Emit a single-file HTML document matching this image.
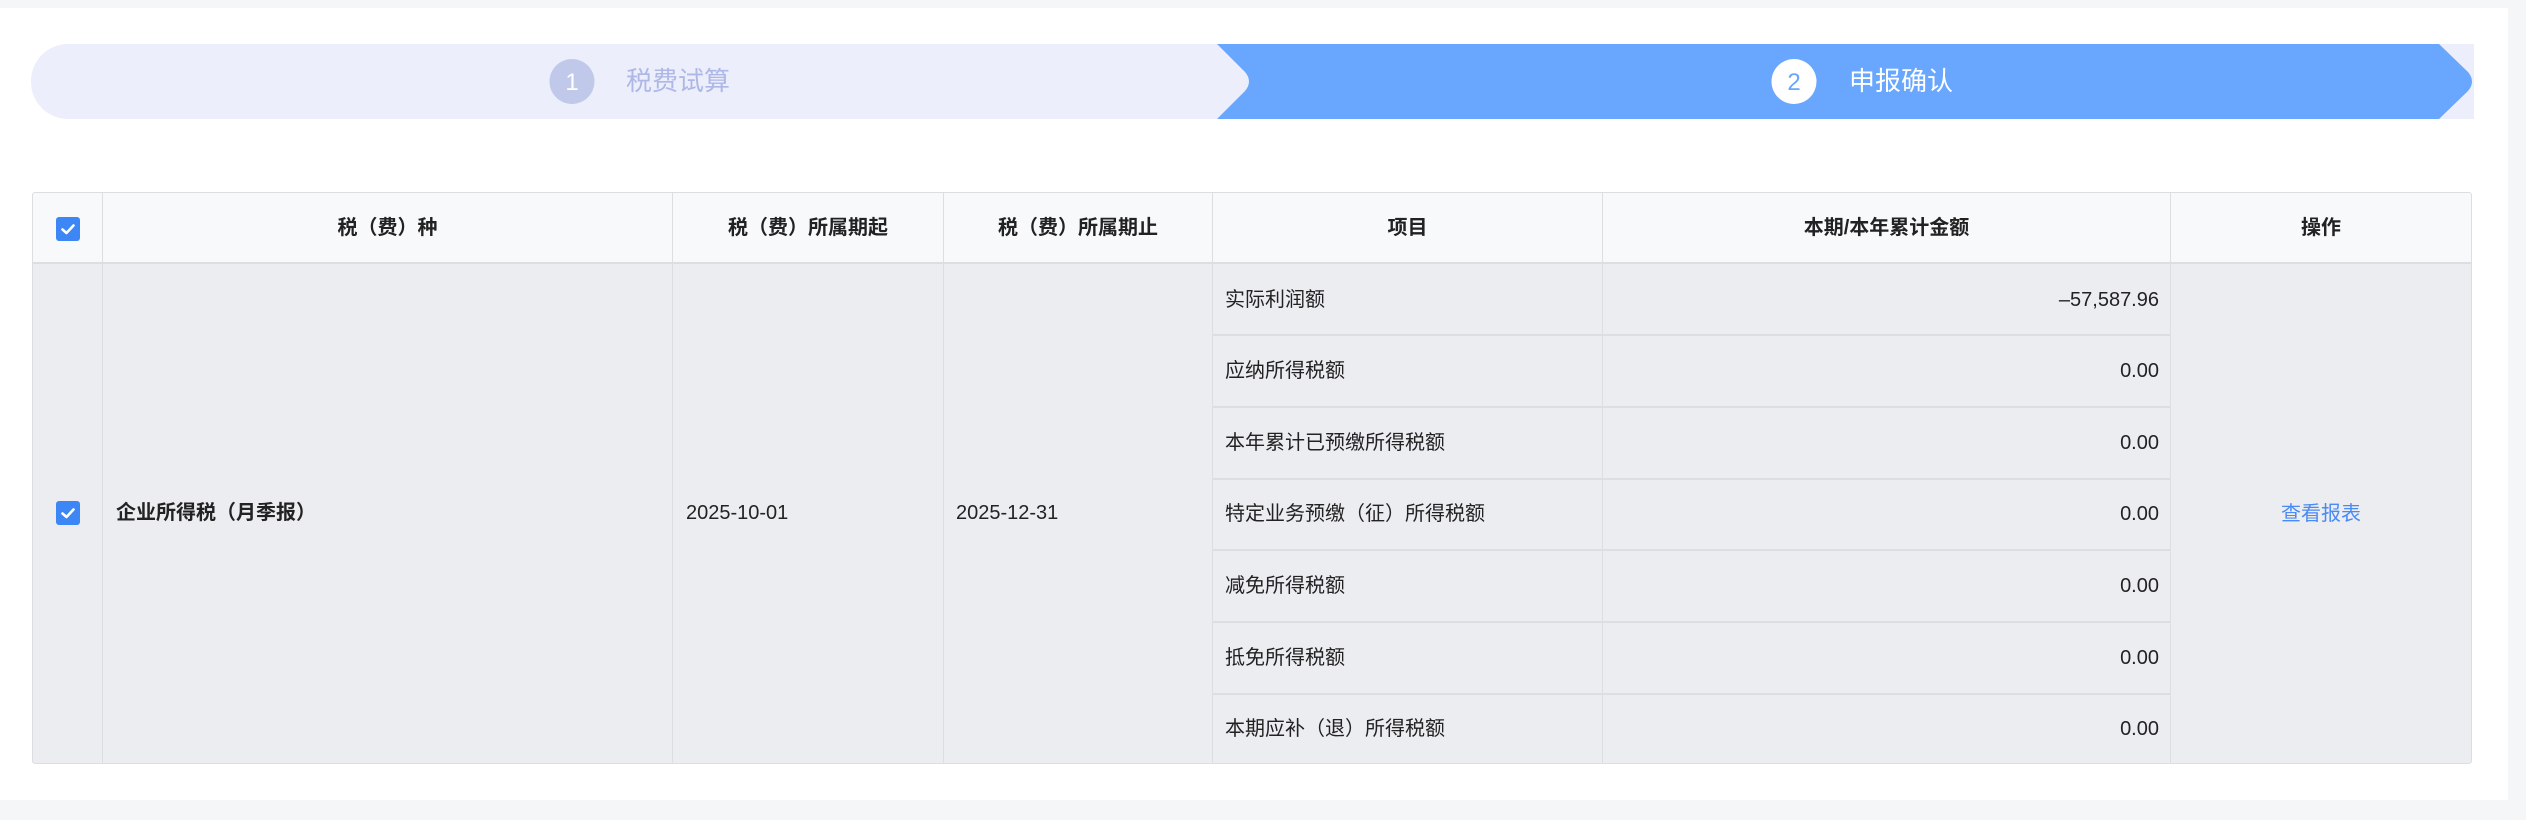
<!DOCTYPE html>
<html><head><meta charset="utf-8"><style>
*{margin:0;padding:0;box-sizing:border-box}
body{width:2526px;height:820px;background:#f5f6f8;font-family:"Liberation Sans","Noto Sans CJK SC",sans-serif;color:#222;position:relative;overflow:hidden}
.card{position:absolute;left:0;top:8px;width:2508px;height:792px;background:#fff}
.a{position:absolute}
.tbl{position:absolute;left:32px;top:192px;width:2440px;height:572px;border:1px solid #dcdee2;border-radius:3px;overflow:hidden;background:#ecedf1}
.hd{position:absolute;left:0;top:0;width:100%;height:71px;background:#f8f9fb;border-bottom:2px solid #dcdee2}
.vl{position:absolute;top:0;bottom:0;width:1px;background:#dcdee2}
.hl{position:absolute;height:2px;background:#dcdee2}
.th{position:absolute;top:0;height:71px;line-height:71px;text-align:center;font-weight:bold;font-size:20px;color:#222}
.td{position:absolute;font-size:20px;line-height:24px}
.cb{position:absolute;width:24px;height:24px;background:#3d86f5;border-radius:3px}
</style></head><body>
<div class="card"></div>
<svg class="a" style="left:0;top:0" width="2526" height="140">
<path d="M68 44 H2474 V119 H68 A37 37 0 0 1 31 81.5 A37 37 0 0 1 68 44Z" fill="#eceefb"/>
<path d="M1217 44 H2439 L2468 72 Q2476 81.5 2468 91 L2439 119 H1217 L1245 91 Q1253 81.5 1245 72Z" fill="#69a7ff"/>
<circle cx="572" cy="81.5" r="22.5" fill="#c0c9ea"/>
<text x="572" y="90" text-anchor="middle" font-size="24" fill="#fff" font-family="Liberation Sans">1</text>
<text x="626" y="90" font-size="26" fill="#aeb8e6" font-family="Liberation Sans, Noto Sans CJK SC, sans-serif">税费试算</text>
<circle cx="1794" cy="81.5" r="22.5" fill="#fff"/>
<text x="1794" y="90" text-anchor="middle" font-size="24" fill="#69a7ff" font-family="Liberation Sans">2</text>
<text x="1849" y="90" font-size="26" fill="#fff" font-family="Liberation Sans, Noto Sans CJK SC, sans-serif">申报确认</text>
</svg>
<div class="tbl">
<div class="hd"></div>
<div class="vl" style="left:69px"></div>
<div class="vl" style="left:639px"></div>
<div class="vl" style="left:910px"></div>
<div class="vl" style="left:1179px"></div>
<div class="vl" style="left:1569px"></div>
<div class="vl" style="left:2137px"></div>
<div class="hl" style="left:1180px;width:957px;top:141px"></div>
<div class="hl" style="left:1180px;width:957px;top:213px"></div>
<div class="hl" style="left:1180px;width:957px;top:285px"></div>
<div class="hl" style="left:1180px;width:957px;top:356px"></div>
<div class="hl" style="left:1180px;width:957px;top:428px"></div>
<div class="hl" style="left:1180px;width:957px;top:500px"></div>
<div class="cb" style="left:23px;top:24px"><svg width="24" height="24"><path d="M6.5 12.5 L10.5 16 L17.5 8.5" stroke="#fff" stroke-width="2.6" fill="none" stroke-linecap="round" stroke-linejoin="round"/></svg></div>
<div class="th" style="left:70px;width:569px">税（费）种</div>
<div class="th" style="left:640px;width:270px">税（费）所属期起</div>
<div class="th" style="left:911px;width:268px">税（费）所属期止</div>
<div class="th" style="left:1180px;width:389px">项目</div>
<div class="th" style="left:1570px;width:567px">本期/本年累计金额</div>
<div class="th" style="left:2138px;width:300px">操作</div>
<div class="cb" style="left:23px;top:308px"><svg width="24" height="24"><path d="M6.5 12.5 L10.5 16 L17.5 8.5" stroke="#fff" stroke-width="2.6" fill="none" stroke-linecap="round" stroke-linejoin="round"/></svg></div>
<div class="td" style="left:83px;top:308px;font-weight:bold">企业所得税（月季报）</div>
<div class="td" style="left:653px;top:308px">2025-10-01</div>
<div class="td" style="left:923px;top:308px">2025-12-31</div>
<div class="td" style="left:1192px;top:95px">实际利润额</div>
<div class="td" style="left:1192px;top:166px">应纳所得税额</div>
<div class="td" style="left:1192px;top:238px">本年累计已预缴所得税额</div>
<div class="td" style="left:1192px;top:309px">特定业务预缴（征）所得税额</div>
<div class="td" style="left:1192px;top:381px">减免所得税额</div>
<div class="td" style="left:1192px;top:453px">抵免所得税额</div>
<div class="td" style="left:1192px;top:524px">本期应补（退）所得税额</div>
<div class="td" style="right:312px;top:95px">–57,587.96</div>
<div class="td" style="right:312px;top:166px">0.00</div>
<div class="td" style="right:312px;top:238px">0.00</div>
<div class="td" style="right:312px;top:309px">0.00</div>
<div class="td" style="right:312px;top:381px">0.00</div>
<div class="td" style="right:312px;top:453px">0.00</div>
<div class="td" style="right:312px;top:524px">0.00</div>
<div class="td" style="left:2138px;width:300px;text-align:center;top:309px;color:#4a8af4">查看报表</div>
</div>
</body></html>
